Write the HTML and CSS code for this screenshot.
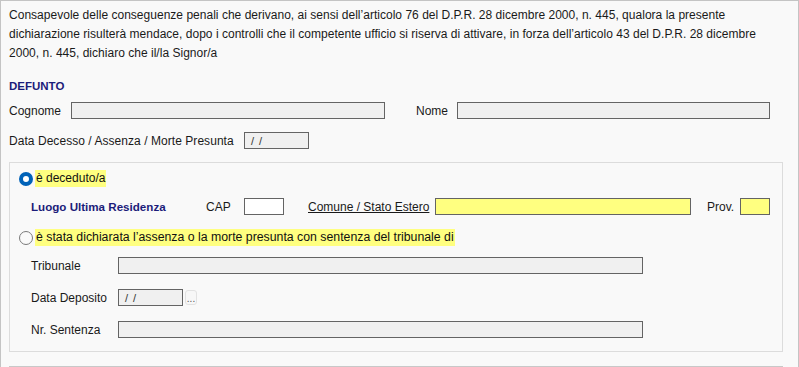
FILE: index.html
```html
<!DOCTYPE html>
<html lang="it">
<head>
<meta charset="utf-8">
<title>Dichiarazione</title>
<link rel="stylesheet" href="styles.css">
</head>
<body>
<div class="page">
  <p class="intro">Consapevole delle conseguenze penali che derivano, ai sensi dell’articolo 76 del D.P.R. 28 dicembre 2000, n. 445, qualora la presente dichiarazione risulterà mendace, dopo i controlli che il competente ufficio si riserva di attivare, in forza dell’articolo 43 del D.P.R. 28 dicembre 2000, n. 445, dichiaro che il/la Signor/a</p>

  <div class="section-title">DEFUNTO</div>

  <div class="row row-names">
    <label class="lbl lbl-cognome">Cognome</label>
    <span class="field field-disabled w-cognome"></span>
    <label class="lbl lbl-nome">Nome</label>
    <span class="field field-disabled w-nome"></span>
  </div>

  <div class="row row-data">
    <label class="lbl lbl-data">Data Decesso / Assenza / Morte Presunta</label>
    <span class="field field-disabled w-date"><span class="date-mask">/ /</span></span>
  </div>

  <div class="box">
    <div class="row radio-row">
      <span class="radio radio-on"></span>
      <span class="hl">è deceduto/a</span>
    </div>

    <div class="row row-luogo">
      <span class="subtitle">Luogo Ultima Residenza</span>
      <label class="lbl lbl-cap">CAP</label>
      <span class="field field-white w-cap"></span>
      <label class="lbl lbl-comune">Comune / Stato Estero</label>
      <span class="field field-yellow w-comune"></span>
      <label class="lbl lbl-prov">Prov.</label>
      <span class="field field-yellow w-prov"></span>
    </div>

    <div class="row radio-row radio-row-2">
      <span class="radio"></span>
      <span class="hl hl-long">è stata dichiarata l’assenza o la morte presunta con sentenza del tribunale di</span>
    </div>

    <div class="row sub-row sub-first">
      <label class="lbl lbl-sub">Tribunale</label>
      <span class="field field-disabled w-long"></span>
    </div>

    <div class="row sub-row">
      <label class="lbl lbl-sub">Data Deposito</label>
      <span class="field field-disabled w-date"><span class="date-mask">/ /</span></span>
      <span class="dots-btn">...</span>
    </div>

    <div class="row sub-row">
      <label class="lbl lbl-sub">Nr. Sentenza</label>
      <span class="field field-disabled w-long"></span>
    </div>
  </div>

  <div class="box box-next"></div>
</div>
</body>
</html>
```

FILE: styles.css
```css
html, body {
  margin: 0;
  padding: 0;
  background: #f9f9f9;
}

body {
  font-family: "Liberation Sans", Arial, sans-serif;
  font-size: 12px;
  color: #1a1a1a;
  overflow: hidden;
}

.page {
  box-sizing: border-box;
  width: 799px;
  height: 367px;
  border: 1px solid #c4c4c4;
  border-bottom: none;
  background: #f9f9f9;
  padding: 5px 15px 0 8px;
}

.intro {
  margin: 0;
  line-height: 19px;
  letter-spacing: 0.02px;
}

.section-title {
  margin-top: 14px;
  line-height: 19px;
  font-weight: bold;
  font-size: 11.5px;
  color: #1c1c7a;
}

.row {
  display: flex;
  align-items: center;
  height: 17px;
}

.row-names {
  margin-top: 6px;
}

.row-data {
  margin-top: 13px;
}

.lbl {
  white-space: nowrap;
}

.lbl-cognome { width: 62px; }
.lbl-nome { width: 41px; margin-left: 31px; }
.lbl-data { width: 235px; letter-spacing: 0.05px; }

.field {
  box-sizing: border-box;
  display: flex;
  align-items: center;
  height: 17px;
  border: 1px solid #646464;
}

.field-disabled { background: #f0f0f0; }
.field-white { background: #ffffff; }
.field-yellow { background: #ffff80; }

.w-cognome { width: 314px; }
.w-nome { width: 313px; }
.w-date { width: 65px; }
.w-cap { width: 40px; }
.w-comune { width: 256px; }
.w-prov { width: 30px; }
.w-long { width: 525px; }

.date-mask {
  padding-left: 6px;
  font-size: 11px;
  letter-spacing: 1px;
  color: #333;
}

.box {
  box-sizing: border-box;
  margin-top: 13px;
  border: 1px solid #dcdcdc;
  padding: 7px 0 13px 9px;
}

.box-next {
  margin-top: 14px;
  height: 10px;
  border-color: #c8c8c8;
  border-bottom: none;
  padding: 0;
}

.radio-row {
  height: 17px;
}

.radio-row-2 {
  margin-top: 14px;
}

.radio {
  box-sizing: border-box;
  width: 14px;
  height: 14px;
  border-radius: 50%;
  border: 1px solid #7a7a7a;
  background: #fafafa;
  margin-right: 2px;
  flex: none;
}

.radio-on {
  border: 4px solid #0062b8;
  background: #ffffff;
}

.hl {
  background: #ffff80;
  line-height: 17px;
  height: 17px;
  padding: 0 1px;
  color: #111;
}

.hl-long {
  font-size: 12.3px;
}

.row-luogo {
  margin-top: 11px;
  padding-left: 12px;
}

.subtitle {
  width: 175px;
  font-weight: bold;
  font-size: 11.6px;
  color: #1c1c7a;
  white-space: nowrap;
}

.lbl-cap { width: 38px; }
.lbl-comune {
  width: 127px;
  margin-left: 24px;
  text-decoration: underline;
}
.lbl-prov {
  width: 33px;
  margin-left: 16px;
}

.sub-row {
  margin-top: 15px;
  padding-left: 12px;
}

.sub-first {
  margin-top: 11px;
}

.lbl-sub { width: 87px; }

.dots-btn {
  box-sizing: border-box;
  width: 12px;
  height: 15px;
  margin-left: 2px;
  border: 1px solid #e2e2e2;
  border-radius: 3px;
  background: #f7f7f7;
  font-size: 10px;
  line-height: 15px;
  text-align: center;
  color: #555;
  overflow: hidden;
  white-space: nowrap;
}
```
